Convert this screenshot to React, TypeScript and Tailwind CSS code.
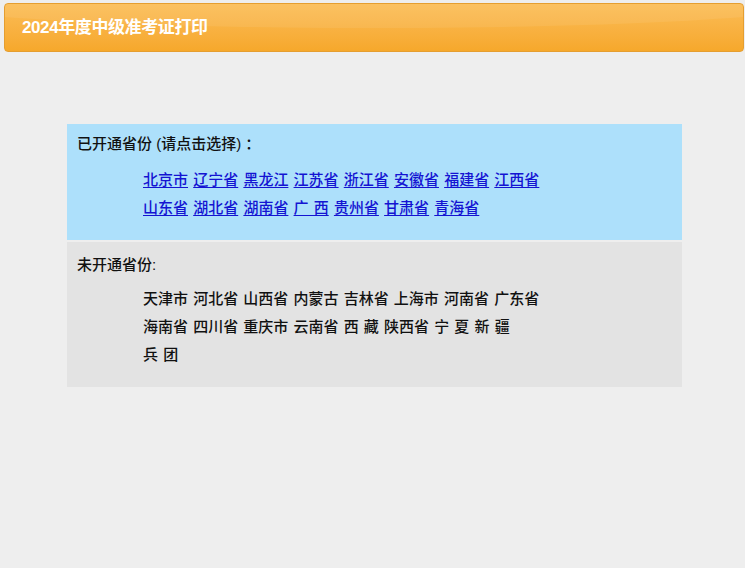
import React from 'react';

const opened = ['北京市', '辽宁省', '黑龙江', '江苏省', '浙江省', '安徽省', '福建省', '江西省', '山东省', '湖北省', '湖南省', '广\u00a0西', '贵州省', '甘肃省', '青海省'];

const notOpened = ['天津市', '河北省', '山西省', '内蒙古', '吉林省', '上海市', '河南省', '广东省', '海南省', '四川省', '重庆市', '云南省', '西\u00a0藏', '陕西省', '宁\u00a0夏', '新\u00a0疆', '兵\u00a0团'];

const font = "font-['Liberation_Sans','Noto_Sans_CJK_SC',sans-serif]";

const App: React.FC = () => {
  return (
    <div className={`min-h-[568px] bg-[#eeeeee] pt-[3px] pl-[4px] pr-[1px] ${font}`}>
      {/* title bar */}
      <div className="relative h-[49px] overflow-hidden rounded-[4px] border border-[#e59e30] bg-gradient-to-b from-[#fbbc55] to-[#f6a82b]">
        <div className="absolute -left-[10%] -top-[26px] h-[50px] w-[120%] rounded-[50%] bg-white/[0.07]" />
        <div className="relative flex h-full items-center pl-[17px]">
          <h1 className="text-[17px] font-bold tracking-[-0.4px] text-white">2024年度中级准考证打印</h1>
        </div>
      </div>

      <div className="ml-[63px] mt-[72px] w-[615px]">
        {/* opened provinces */}
        <div className="bg-[#ade0fb] pt-[10px] pb-[18px] pl-[10px]">
          <p className="text-[15px] font-medium leading-[20px] text-[#111]">已开通省份 (请点击选择) ：</p>
          <div className="mt-[12px] w-[402px] pl-[66px] box-content text-[15px] font-medium leading-[28px] [word-spacing:1px]">
            {opened.map((p, i) => (
              <React.Fragment key={p}>
                <a href="#" className="text-[#1414d2] underline underline-offset-[2px]">{p}</a>
                {i < opened.length - 1 ? ' ' : ''}
              </React.Fragment>
            ))}
          </div>
        </div>

        {/* not opened provinces */}
        <div className="mt-[2px] bg-[#e3e3e3] pt-[13px] pb-[18px] pl-[10px]">
          <p className="text-[15px] font-medium leading-[20px] text-[#111]">未开通省份:</p>
          <div className="mt-[10px] w-[402px] pl-[66px] box-content text-[15px] font-medium leading-[28px] text-[#111] [word-spacing:1px]">
            {notOpened.join(' ')}
          </div>
        </div>
      </div>
    </div>
  );
};

export default App;
